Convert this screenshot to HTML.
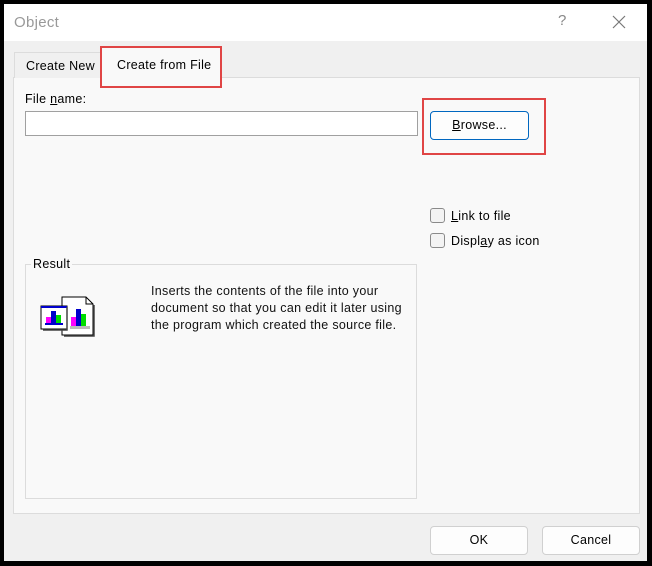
<!DOCTYPE html>
<html><head><style>
*{box-sizing:border-box;margin:0;padding:0}
body{width:652px;height:566px;background:#000;position:relative;overflow:hidden;font-family:"Liberation Sans",sans-serif;font-size:12px;color:#000;letter-spacing:0.3px}
.abs{position:absolute}
.win{left:4px;top:4px;width:643px;height:557px;background:#f0f0f0}
.title{left:4px;top:4px;width:643px;height:37px;background:#fff}
.panel{left:13px;top:77px;width:627px;height:437px;background:#f9f9f9;border:1px solid #dcdcdc}
.btn{background:#fdfdfd;border:1px solid #d0d0d0;border-radius:4px;text-align:center;font-size:12.5px}
.cb{width:15px;height:15px;border:1px solid #8a8a8a;border-radius:3px;background:#f3f3f3}
.red{border:2px solid #e04545}
</style></head><body>
<div class="abs win"></div>
<div class="abs title"></div>
<div class="abs" style="left:14px;top:14px;font-size:15px;color:#999">Object</div>
<div class="abs" style="left:558px;top:12px;font-size:15px;color:#888">?</div>
<svg class="abs" style="left:612px;top:15px" width="14" height="14"><path d="M1 1L13 13M13 1L1 13" stroke="#777" stroke-width="1.2"/></svg>
<div class="abs panel"></div>
<div class="abs" style="left:14px;top:52px;width:87px;height:26px;background:#f0f0f0;border:1px solid #dcdcdc;border-bottom:none"></div>
<div class="abs" style="left:26px;top:59px;font-size:12.5px">Create New</div>
<div class="abs" style="left:101px;top:47px;width:120px;height:32px;background:#f9f9f9;border:1px solid #dcdcdc;border-bottom:none"></div>
<div class="abs" style="left:117px;top:58px;font-size:12.5px">Create from File</div>
<div class="abs red" style="left:100px;top:46px;width:122px;height:42px"></div>
<div class="abs" style="left:25px;top:92px;font-size:12.5px">File <u>n</u>ame:</div>
<div class="abs" style="left:25px;top:111px;width:393px;height:25px;background:#fff;border:1px solid #a0a0a0"></div>
<div class="abs btn" style="left:430px;top:111px;width:99px;height:29px;border:1px solid #0067c0;line-height:27px"><u>B</u>rowse...</div>
<div class="abs red" style="left:422px;top:98px;width:124px;height:57px"></div>
<div class="abs cb" style="left:430px;top:208px"></div>
<div class="abs" style="left:451px;top:209px;font-size:12.5px"><u>L</u>ink to file</div>
<div class="abs cb" style="left:430px;top:233px"></div>
<div class="abs" style="left:451px;top:234px;font-size:12.5px">Displ<u>a</u>y as icon</div>
<div class="abs" style="left:25px;top:264px;width:392px;height:235px;border:1px solid #dcdcdc"></div>
<div class="abs" style="left:31px;top:257px;background:#f9f9f9;padding:0 2px;font-size:12.5px">Result</div>
<svg class="abs" style="left:40px;top:295px" width="56" height="42">
<path d="M22 2H46L53 9V40H22Z" fill="#fff" stroke="#000"/><path d="M46 2V9H53" fill="none" stroke="#000"/>
<path d="M54 10V41H24" fill="none" stroke="#444" stroke-width="1.5"/>
<rect x="30" y="31" width="20" height="3" fill="#bbb"/>
<rect x="31" y="22" width="5" height="9" fill="#f0f"/><rect x="36" y="14" width="5" height="17" fill="#00c"/><rect x="41" y="19" width="5" height="12" fill="#0d0"/>
<rect x="1" y="11" width="26" height="23" fill="#fff" stroke="#000"/><rect x="1" y="11" width="26" height="2" fill="#00c"/>
<path d="M27 12V35H3" fill="none" stroke="#444" stroke-width="1.5"/>
<rect x="5" y="28" width="18" height="2" fill="#00c"/>
<rect x="6" y="22" width="5" height="6" fill="#f0f"/><rect x="11" y="16" width="5" height="12" fill="#00c"/><rect x="16" y="20" width="5" height="8" fill="#0d0"/>
</svg>
<div class="abs" style="left:151px;top:283px;font-size:12.5px;line-height:17px;color:#111">Inserts the contents of the file into your<br>document so that you can edit it later using<br>the program which created the source file.</div>
<div class="abs btn" style="left:430px;top:526px;width:98px;height:29px;line-height:27px">OK</div>
<div class="abs btn" style="left:542px;top:526px;width:98px;height:29px;line-height:27px">Cancel</div>
</body></html>
